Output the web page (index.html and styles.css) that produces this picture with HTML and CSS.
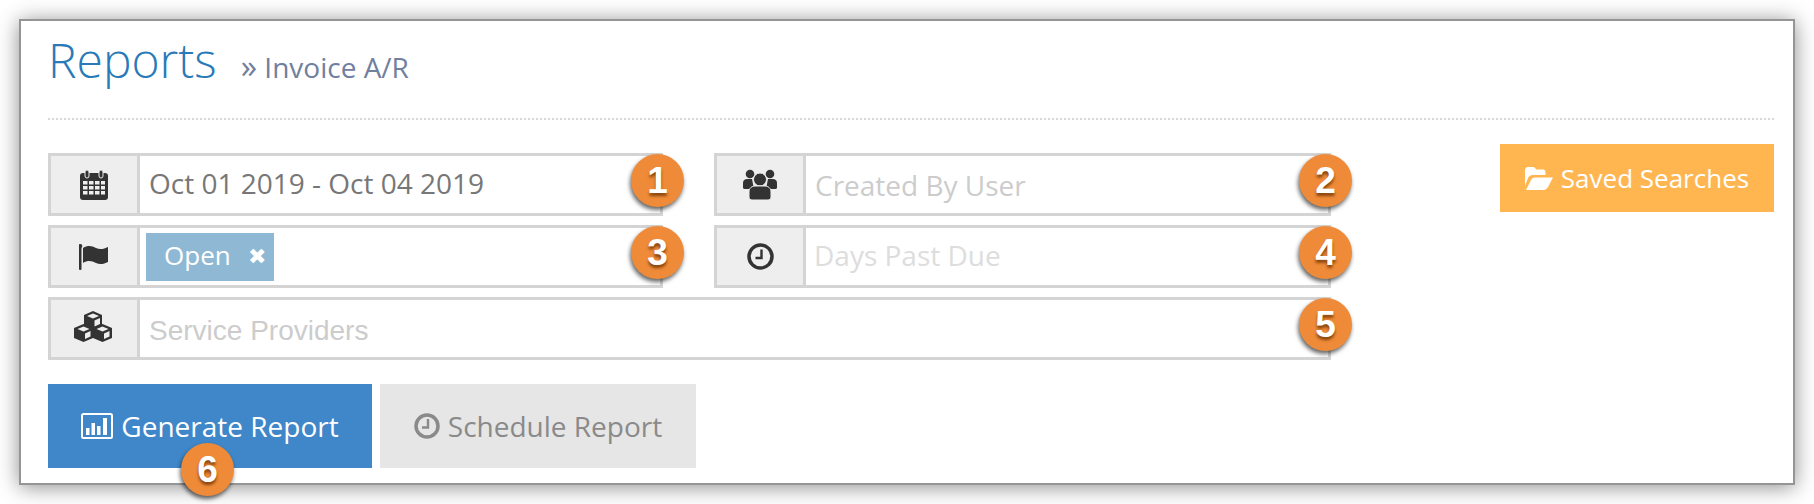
FILE: index.html
```html
<!DOCTYPE html>
<html lang="en">
<head>
  <meta charset="UTF-8" />
  <title>Reports - Invoice A/R</title>
  <link rel="stylesheet" href="styles.css">
</head>
<body>
  <div class="panel">
    <div class="page-head">
      <h1 class="page-title">Reports</h1>
      <span class="crumb"><span class="crumb-sep">»</span> Invoice A/R</span>
    </div>

    <div class="filters">
      <div class="fields">
        <div class="field">
          <span class="addon">
            <svg width="28" height="30" viewBox="0 0 28 30">
              <rect x="0" y="3" width="28" height="27" rx="3" fill="#333"/>
              <rect x="5" y="0" width="4" height="8" rx="2" fill="#333" stroke="#eee"/>
              <rect x="19" y="0" width="4" height="8" rx="2" fill="#333" stroke="#eee"/>
              <path d="M3 11h4.500v3.500H3zM9 11h4.500v3.500H9zM15 11h4.500v3.500H15zM21 11h4v3.500h-4zM3 16h4.500v3.500H3zM9 16h4.500v3.500H9zM15 16h4.500v3.500H15zM21 16h4v3.500h-4zM3 21h4.500v3.500H3zM9 21h4.500v3.500H9zM15 21h4.500v3.500H15zM21 21h4v3.500h-4z" fill="#eee"/>
            </svg>
          </span>
          <span class="value raised">Oct 01 2019 - Oct 04 2019</span>
          <span class="badge badge-field">1</span>
        </div>
        <div class="field">
          <span class="addon">
            <svg width="34" height="31" viewBox="0 0 34 31" fill="#333">
              <circle cx="7" cy="5" r="4.300"/>
              <circle cx="27" cy="5" r="4.300"/>
              <path d="M0 19v-5c0-3 2-4 4-4h5l2 10H3c-2 0-3-.5-3-1zM34 19v-5c0-3-2-4-4-4h-5l-2 10h8c2 0 3-.5 3-1z"/>
              <circle cx="17" cy="10.500" r="6.500" stroke="#eee"/>
              <path d="M6 28v-5c0-4 3-6 6-6h10c3 0 6 2 6 6v5c0 2-1.500 3-3 3H9c-1.500 0-3-1-3-3z" stroke="#eee"/>
            </svg>
          </span>
          <span class="value placeholder">Created By User</span>
          <span class="badge badge-field">2</span>
        </div>
        <div class="field">
          <span class="addon">
            <svg width="30" height="26" viewBox="0 0 30 26" fill="#333">
              <rect x="0" y="1" width="2.500" height="25" rx="1"/>
              <circle cx="1.300" cy="2" r="2"/>
              <path d="M4 4c5-3 9-2 13 0s8 1 12-1v15c-4 2-8 3-12 1s-8-3-13 0z"/>
            </svg>
          </span>
          <span class="tag">Open <span class="tag-close">✖</span></span>
          <span class="badge badge-field">3</span>
        </div>
        <div class="field">
          <span class="addon">
            <svg width="27" height="27" viewBox="0 0 27 27">
              <circle cx="13.500" cy="13.500" r="11.500" fill="none" stroke="#333" stroke-width="3.500"/>
              <path d="M14.500 6.500v8.500h-6" fill="none" stroke="#333" stroke-width="2.400"/>
            </svg>
          </span>
          <span class="value placeholder faint raised">Days Past Due</span>
          <span class="badge badge-field">4</span>
        </div>
        <div class="field field-wide">
          <span class="addon addon-cubes">
            <svg width="38" height="31" viewBox="0 0 38 31">
              <path d="M19 0l9 4v10l-9 4-9-4V4z" fill="#333"/>
              <path d="M19 2.500l6 2.500-6 2.500-6-2.500zM20.500 9.500l5.500-2.500v6l-5.500 2.500z" fill="#eee"/>
              <path d="M9.500 13L19 17v10l-9.500 4L0 27V17z" fill="#333"/>
              <path d="M9.500 15.500l6 2.500-6 2.500-6-2.500zM11 22.500l5.500-2.500v5.500L11 28z" fill="#eee"/>
              <path d="M28.500 13L38 17v10l-9.500 4L19 27V17z" fill="#333"/>
              <path d="M28.500 15.500l6 2.500-6 2.500-6-2.500zM30 22.500l5.500-2.500v5.500L30 28z" fill="#eee"/>
            </svg>
          </span>
          <span class="value placeholder arial">Service Providers</span>
          <span class="badge badge-field">5</span>
        </div>
      </div>

      <div class="btn btn-saved">
        <svg width="28" height="23" viewBox="0 0 28 23" fill="#fff">
          <path d="M0 19V3c0-1.500 1-3 3-3h5c1.500 0 2.500 1 3 2.500h7c1.500 0 2.500 1 2.500 3V8H8c-2.500 0-4 1-5 3z"/>
          <path d="M1 23l5-10c.7-1.500 2-2.500 4-2.500h18l-5 9.500c-1.200 2-2.500 3-4.500 3z"/>
        </svg>
        Saved Searches
      </div>
    </div>

    <div class="actions">
      <div class="btn btn-generate">
        <svg width="32" height="26" viewBox="0 0 32 26" fill="#fff">
          <rect x="1" y="1" width="30" height="24" rx="1.500" fill="none" stroke="#fff" stroke-width="2"/>
          <path d="M5 15h3.500v7H5zM10.500 10h3.500v12h-3.500zM16 13h3.500v9H16zM22 5h4v17h-4z"/>
        </svg>
        Generate Report
        <span class="badge badge-button">6</span>
      </div>
      <div class="btn btn-schedule">
        <svg width="26" height="26" viewBox="0 0 26 26">
          <circle cx="13" cy="13" r="11" fill="none" stroke="#8a8a8a" stroke-width="3.500"/>
          <path d="M14 6v8.500H8" fill="none" stroke="#8a8a8a" stroke-width="2.400"/>
        </svg>
        Schedule Report
      </div>
    </div>
  </div>
</body>
</html>
```

FILE: styles.css
```css
* {
  box-sizing: border-box;
}
html, body {
  height: 100%;
}
body {
  margin: 0;
  padding: 19px;
  background: #fff;
  font-family: "Open Sans", "Liberation Sans", sans-serif;
  overflow: hidden;
}
.panel {
  height: 466px;
  padding: 0 19px 0 27px;
  background: #fff;
  border: 2px solid #959595;
  box-shadow: 0 2px 20px rgba(0, 0, 0, 0.45);
}
.page-head {
  display: flex;
  align-items: baseline;
  gap: 24px;
  height: 99px;
  padding-top: 8px;
  border-bottom: 2px dotted #d8d8d8;
}
.page-title {
  margin: 0;
  font-size: 48px;
  font-weight: 300;
  line-height: 62px;
  color: #2a7ab8;
}
.crumb {
  font-size: 28px;
  color: #70809e;
}
.crumb-sep {
  font-size: 33px;
  line-height: 1;
}
.filters {
  display: flex;
  justify-content: space-between;
  align-items: flex-start;
  padding-top: 24px;
}
.fields {
  display: grid;
  grid-template-columns: 615px 617px;
  column-gap: 51px;
  row-gap: 9px;
  margin-top: 9px;
}
.field {
  position: relative;
  display: flex;
  align-items: center;
  height: 63px;
  border: 3px solid #d4d4d4;
  background: #fff;
}
.field-wide {
  grid-column: 1 / 3;
}
.addon {
  display: flex;
  align-items: center;
  justify-content: center;
  flex: none;
  width: 89px;
  height: 100%;
  background: #eee;
  border-right: 3px solid #d4d4d4;
}
.addon-cubes {
  padding: 0 2px 4px 0;
}
.value {
  padding-left: 9px;
  font-size: 28px;
  color: #777;
}
.raised {
  padding-bottom: 4px;
}
.placeholder {
  padding-left: 9px;
  color: #ccc;
}
.faint {
  padding-left: 8px;
  color: #ddd;
}
.arial {
  padding-top: 4px;
  font-family: "Liberation Sans", Arial, sans-serif;
}
.tag {
  display: flex;
  align-items: center;
  height: 48px;
  width: 128px;
  margin-left: 6px;
  padding: 0 0 4px 18px;
  background: #8fb8d4;
  color: #fff;
  font-size: 26px;
}
.tag-close {
  margin-left: 17px;
  font-size: 22px;
}
.btn {
  display: flex;
  align-items: center;
  justify-content: center;
  gap: 8px;
  font-size: 28px;
}
.btn-saved {
  width: 274px;
  height: 68px;
  background: #ffb651;
  color: #fff;
  font-size: 26px;
}
.actions {
  display: flex;
  gap: 8px;
  margin-top: 24px;
}
.btn-generate {
  position: relative;
  width: 324px;
  height: 84px;
  background: #3f87c9;
  color: #fff;
}
.btn-schedule {
  width: 316px;
  height: 84px;
  background: #e6e6e6;
  color: #8a8a8a;
}
.badge {
  position: absolute;
  display: flex;
  align-items: center;
  justify-content: center;
  width: 53px;
  height: 53px;
  border-radius: 50%;
  background: #ef8b38;
  color: #fff;
  font-family: "Liberation Sans", Arial, sans-serif;
  font-size: 37px;
  font-weight: bold;
  line-height: 1;
  text-shadow: 0 3px 3px rgba(110, 50, 0, 0.8);
  box-shadow: -1px 3px 4px rgba(0, 0, 0, 0.6);
}
.badge-field {
  top: -2px;
  right: -24px;
}
.badge-button {
  left: 133px;
  top: 59px;
}
```
